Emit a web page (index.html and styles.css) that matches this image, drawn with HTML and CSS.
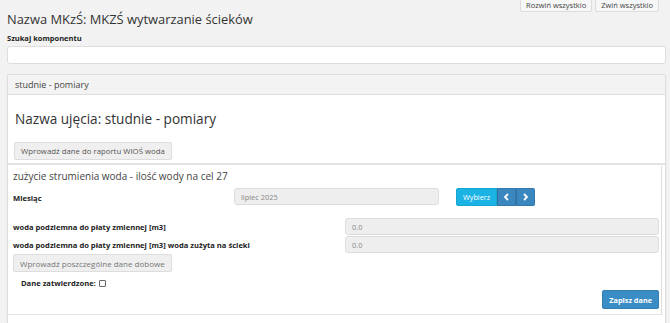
FILE: index.html
```html
<!DOCTYPE html>
<html lang="pl">
<head>
  <meta charset="UTF-8">
  <title>MKZŚ wytwarzanie ścieków</title>
  <link rel="stylesheet" href="styles.css">
</head>
<body>
  <div class="top">
    <h1>Nazwa MKzŚ: MKZŚ wytwarzanie ścieków</h1>
    <div class="tools">
      <button class="btn-tool">Rozwiń wszystkio</button>
      <button class="btn-tool">Zwiń wszystkio</button>
    </div>
  </div>

  <label class="search-label" for="search">Szukaj komponentu</label>
  <input class="search" id="search" type="text">

  <div class="panel">
    <div class="panel-head">studnie - pomiary</div>
    <div class="panel-body">
      <h3>Nazwa ujęcia: studnie - pomiary</h3>
      <button class="btn-grey">Wprowadź dane do raportu WIOŚ woda</button>
    </div>

    <div class="stream">
      <h4>zużycie strumienia woda - ilość wody na cel 27</h4>
      <div class="row-month">
        <span class="lbl">Miesiąc</span>
        <input class="field month" type="text" value="lipiec 2025" readonly>
        <div class="btn-group">
          <button class="btn-pick">Wybierz</button>
          <button class="btn-arrow">
            <svg width="7" height="8" viewBox="0 0 7 8"><path d="M5 1 L2 4 L5 7" fill="none" stroke="#fff" stroke-width="1.8"/></svg>
          </button>
          <button class="btn-arrow">
            <svg width="7" height="8" viewBox="0 0 7 8"><path d="M2 1 L5 4 L2 7" fill="none" stroke="#fff" stroke-width="1.8"/></svg>
          </button>
        </div>
      </div>
      <div class="row-val">
        <span class="lbl">woda podziemna do płaty zmiennej [m3]</span>
        <input class="field" type="text" value="0.0" readonly>
      </div>
      <div class="row-val">
        <span class="lbl">woda podziemna do płaty zmiennej [m3] woda zużyta na ścieki</span>
        <input class="field" type="text" value="0.0" readonly>
      </div>
      <button class="btn-grey btn-daily">Wprowadź poszczególne dane dobowe</button>
      <div class="confirm">
        <span class="lbl">Dane zatwierdzone:</span>
        <span class="check"></span>
      </div>
      <div class="save-row">
        <button class="btn-save">Zapisz dane</button>
      </div>
    </div>
  </div>
</body>
</html>
```

FILE: styles.css
```css
body { margin: 0; padding: 0 4px 0 7px; background: #f2f2f2; font-family: "Open Sans", "Liberation Sans", sans-serif; color: #333; }
button { font-family: inherit; cursor: pointer; }

.top { display: flex; justify-content: space-between; align-items: flex-start; }
.top h1 { margin: 0; padding-top: 10px; font-size: 12.9px; font-weight: 400; line-height: 18px; color: #333; }
.tools { display: flex; gap: 3px; margin-top: -2px; margin-right: 7px; }
.btn-tool { height: 14px; padding: 0 5px; font-size: 7.5px; color: #444; background: #f7f7f7; border: 1px solid #ddd; border-radius: 2px; }

.search-label { display: block; margin-top: 5px; font-size: 7.5px; font-weight: 700; line-height: 10px; color: #222; }
.search { display: block; box-sizing: border-box; width: 100%; height: 18px; margin-top: 3px; border: 1px solid #ddd; border-radius: 3px; background: #fff; }

.panel { margin-top: 10px; background: #fff; border: 1px solid #ddd; border-radius: 2px; box-shadow: 0 1px 2px rgba(0,0,0,0.06); }
.panel-head { height: 19px; line-height: 19px; padding-left: 7px; font-size: 9px; background: #f3f3f3; border-bottom: 1px solid #ddd; color: #444; }
.panel-body { padding: 0 7px 3px; border-bottom: 2px solid #e4e4e4; }
.panel-body h3 { margin: 0; padding: 15px 0 0; font-size: 13.6px; font-weight: 400; line-height: 18px; color: #333; }
.btn-grey { height: 18px; padding: 0 6px; font-size: 7.8px; color: #555; background: #efefef; border: 1px solid #ddd; border-radius: 2px; }
.panel-body .btn-grey { margin-top: 14px; margin-left: -1px; }

.stream { margin: 1px 3px 9px -1px; padding: 0 2px 5px 5px; border-left: 1px solid #ddd; border-right: 1px solid #ddd; border-bottom: 1px solid #e4e4e4; }
.stream h4 { margin: 0; padding-top: 3px; font-size: 10px; font-weight: 400; line-height: 14px; color: #444; }
.lbl { font-size: 7.6px; font-weight: 700; color: #222; }
.row-month { display: flex; align-items: flex-start; margin-top: 9px; }
.row-month .lbl { width: 221px; padding-top: 1px; line-height: 10px; }
.field { box-sizing: border-box; height: 17px; padding: 0 6px; font-family: "Open Sans", sans-serif; font-size: 7.4px; color: #888; background: #eee; border: 1px solid #ddd; border-radius: 3px; }
.month { width: 205px; margin-top: -4px; }
.btn-group { display: flex; margin-left: 17px; margin-top: -4px; }
.btn-pick { height: 18px; padding: 0 6px; font-size: 7.3px; color: #fff; background: #1bb3e4; border: 1px solid #14a6d5; border-radius: 2px 0 0 2px; }
.btn-arrow { width: 19px; height: 18px; padding: 0; display: flex; align-items: center; justify-content: center; background: #3a87bf; border: 1px solid #3279ad; border-left-color: #2f6f9e; }
.btn-arrow:last-child { border-radius: 0 2px 2px 0; }
.row-val { display: flex; align-items: center; height: 17px; }
.row-val .lbl { width: 332px; }
.row-val .field { flex: 1; }
.row-val + .row-val { margin-top: 1px; }
.row-month + .row-val { margin-top: 12px; }
.btn-daily { display: block; margin-top: 1px; font-size: 8px; color: #777; }
.confirm { display: flex; align-items: center; margin: 6px 0 0 8px; }
.check { width: 5px; height: 5px; margin-left: 3px; border: 1px solid #666; border-radius: 1px; background: #fff; }
.save-row { display: flex; justify-content: flex-end; margin-top: 2px; }
.btn-save { height: 19px; padding: 0 6px; font-size: 7.3px; font-weight: 700; color: #fff; background: #3a8cc4; border: 1px solid #337eb2; border-radius: 2px; }
```
